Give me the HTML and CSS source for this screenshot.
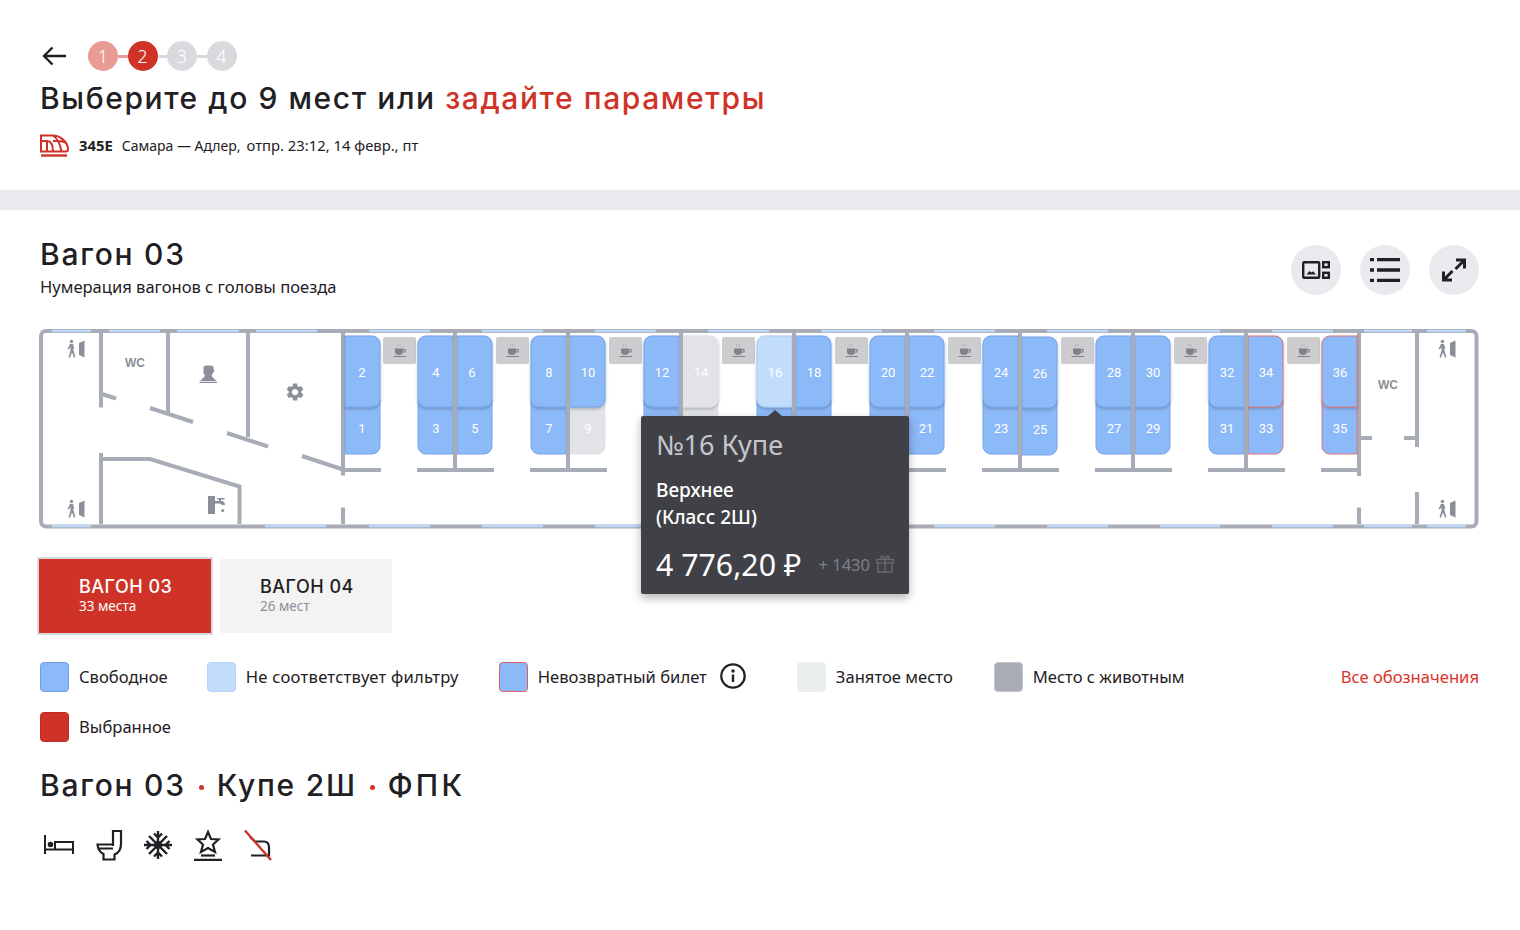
FILE: index.html
```html
<!DOCTYPE html>
<html lang="ru">
<head>
<meta charset="utf-8">
<title>Выбор мест</title>
<link rel="stylesheet" href="styles.css">
</head>
<body>
<header class="top">
  <div class="steps-row">
    <svg class="back" width="26" height="20" viewBox="0 0 26 20"><path d="M24 10H2M10.500 1.500 2 10l8.500 8.500" fill="none" stroke="#1f2024" stroke-width="2.400"/></svg>
    <ol class="steps">
      <li class="step done">1</li>
      <li class="link done"></li>
      <li class="step current">2</li>
      <li class="link"></li>
      <li class="step">3</li>
      <li class="link"></li>
      <li class="step">4</li>
    </ol>
  </div>
  <h1 class="title">Выберите до 9 мест или <a class="accent">задайте параметры</a></h1>
  <div class="route">
    <svg class="train" width="29" height="23" viewBox="0 0 29 23"><g fill="none" stroke="#cf3328" stroke-width="2"><path d="M1 1.500H13C20 1.500 26.500 7 28 14V15C28 16.500 27 17.500 26 17.500H1ZM1 7H7C11 7 13 10 13 17.500M7 7V17.500M13 7H18C21 7 24 7.500 26 9M13 1.500C17 4 20 9 21.500 17.500"/><path d="M1 21.500H27" stroke-width="2.400"/></g></svg>
    <b class="num">345Е</b>
    <span class="path">Самара — Адлер,</span>
    <span class="dep">отпр. 23:12, 14 февр., пт</span>
  </div>
</header>
<div class="band"></div>
<main class="wagon">
  <div class="wagon-head">
    <div>
      <h2 class="h2">Вагон 03</h2>
      <p class="sub">Нумерация вагонов с головы поезда</p>
    </div>
    <div class="tools">
      <button class="tool"><svg width="28" height="18" viewBox="0 0 28 18"><g fill="none" stroke="#1f2024" stroke-width="2.400"><rect x="1.200" y="1.200" width="16" height="15.600" rx="1"/><rect x="21.200" y="1.200" width="5.600" height="5"/><rect x="21.200" y="11.800" width="5.600" height="5"/></g><path d="M4.500 13.500 7.500 10 9.500 11.500 11 10.200 14 13.500Z" fill="#1f2024"/></svg></button>
      <button class="tool"><svg width="30" height="24" viewBox="0 0 30 24"><path d="M0 1.700H4M7 1.700H30M0 12H4M7 12H30M0 22.300H4M7 22.300H30" fill="none" stroke="#1f2024" stroke-width="3.300"/></svg></button>
      <button class="tool"><svg width="24" height="24" viewBox="0 0 24 24"><path d="M14 2H22.500V10.500M22 2.500 13.500 11M10 22H1.500V13.500M2 21.500 10.500 13" fill="none" stroke="#1f2024" stroke-width="3"/></svg></button>
    </div>
  </div>

  <div class="plan">
    <svg class="plan-svg" width="1440" height="200" viewBox="39 329 1440 200">
      <defs>
        <path id="ul" d="M8 0H35V71H8a8 8 0 0 1-8-8V8a8 8 0 0 1 8-8z"/>
        <path id="ur" d="M0 0H27a8 8 0 0 1 8 8V63a8 8 0 0 1-8 8H0z"/>
        <path id="ll" d="M0 0H35V54H8a8 8 0 0 1-8-8z"/>
        <path id="lr" d="M0 0H35V46a8 8 0 0 1-8 8H0z"/>
        <filter id="lift" x="-30%" y="-10%" width="160%" height="125%"><feDropShadow dx="0" dy="1.500" stdDeviation="1.500" flood-color="#40506a" flood-opacity=".4"/></filter>
        <g id="cup">
          <rect x="-16.500" y="-13.500" width="33" height="27" rx="2" fill="#cdcdcf"/>
          <path d="M-4.500-2H3.500V1.500C3.500 3.500 1.500 4.500-.5 4.500S-4.500 3.500-4.500 1.500Z" fill="#7f828a"/>
          <path d="M3-1H5.500V1.500H2.500" fill="none" stroke="#7f828a" stroke-width="1.200"/>
          <path d="M-6 6H6.500" stroke="#7f828a" stroke-width="1"/>
          <path d="M-2-6.500V-4M.5-6.500V-4" stroke="#aeb0b5" stroke-width="1"/>
        </g>
        <g id="exit" fill="#8b8f99">
          <circle cx="-4.500" cy="-7.500" r="1.700"/>
          <path d="M-6-5H-3L-1.500 0-3-.5-2 3-.5 8.500H-2L-4 3.500-6 8.500H-7.500L-5.500 1.500-5.500-2-7 0.500-8.500 0Z"/>
          <path d="M3-6 8.500-8.500V8.500L3 6Z"/>
        </g>
      </defs>

      <rect class="frame" x="41" y="331" width="1435.500" height="195.500" rx="5"/>
      <path class="win" d="M52 331H91M109 331H160M177 331H239M256 331H317M369 331H430M482 331H543M595 331H656M708 331H769M821 331H882M934 331H995M1047 331H1108M1160 331H1220M1272 331H1333M1364 331H1412M1427 331H1466M52 526H91M265 526H326M369 526H430M482 526H543M595 526H656M708 526H769M821 526H882M934 526H995M1047 526H1108M1160 526H1220M1272 526H1333M1364 526H1412M1427 526H1466"/>

      <g class="walls">
        <path d="M101 333V407.500M102 394 116 398.500M168 333V413M150 408 193 422M248 333V437M227 433 268 446.500M343 333V475.500M302 456 343 469.500"/>
        <path d="M101 453V524M101 459H150L239.500 486.500V524M343 507.500V524"/>
        <path d="M1359 333V476M1359 507.500V524M1359 438H1372M1417 333V447M1404 438H1417M1417 492V524"/>
        <path d="M345 470H381M417 470H494M530 470H607M643 470H720M756 470H833M869 470H946M982 470H1059M1095 470H1172M1208 470H1285M1321 470H1359"/>
      </g>

      <use href="#cup" x="399.500" y="350.500"/>
      <use href="#cup" x="512.500" y="350.500"/>
      <use href="#cup" x="625.500" y="350.500"/>
      <use href="#cup" x="738.500" y="350.500"/>
      <use href="#cup" x="851.500" y="350.500"/>
      <use href="#cup" x="964.500" y="350.500"/>
      <use href="#cup" x="1077.500" y="350.500"/>
      <use href="#cup" x="1190.500" y="350.500"/>
      <use href="#cup" x="1303.500" y="350.500"/>

      <g class="seats">
        <use href="#lr" x="345" y="400" class="free"/>
        <use href="#ll" x="418" y="400" class="free"/><use href="#lr" x="457" y="400" class="free"/>
        <use href="#ll" x="531" y="400" class="free"/><use href="#lr" x="570" y="400" class="busy"/>
        <use href="#ll" x="644" y="400" class="free"/><use href="#lr" x="683" y="400" class="busy"/>
        <use href="#ll" x="757" y="400" class="free"/><use href="#lr" x="796" y="400" class="free"/>
        <use href="#ll" x="870" y="400" class="free"/><use href="#lr" x="909" y="400" class="free"/>
        <use href="#ll" x="983" y="400" class="free"/><use href="#lr" x="1022" y="401" class="free"/>
        <use href="#ll" x="1096" y="400" class="free"/><use href="#lr" x="1135" y="400" class="free"/>
        <use href="#ll" x="1209" y="400" class="free"/><use href="#lr" x="1248" y="400" class="noref"/>
        <use href="#ll" x="1322" y="400" class="noref"/>
      </g>
      <g class="seats upper">
        <use href="#ur" x="345" y="336" class="free"/>
        <use href="#ul" x="418" y="336" class="free"/><use href="#ur" x="457" y="336" class="free"/>
        <use href="#ul" x="531" y="336" class="free"/><use href="#ur" x="570" y="336" class="free"/>
        <use href="#ul" x="644" y="336" class="free"/><use href="#ur" x="683" y="336" class="busy"/>
        <use href="#ul" x="757" y="336" class="nomatch"/><use href="#ur" x="796" y="336" class="free"/>
        <use href="#ul" x="870" y="336" class="free"/><use href="#ur" x="909" y="336" class="free"/>
        <use href="#ul" x="983" y="336" class="free"/><use href="#ur" x="1022" y="337" class="free"/>
        <use href="#ul" x="1096" y="336" class="free"/><use href="#ur" x="1135" y="336" class="free"/>
        <use href="#ul" x="1209" y="336" class="free"/><use href="#ur" x="1248" y="336" class="noref"/>
        <use href="#ul" x="1322" y="336" class="noref"/>
      </g>

      <g class="walls">
        <path d="M455 333V470M568 333V470M681 333V470M794 333V470M907 333V470M1020 333V470M1133 333V470M1246 333V470"/>
      </g>

      <g class="nums">
        <text x="362" y="372.500">2</text><text x="362" y="428">1</text>
        <text x="436" y="372.500">4</text><text x="472" y="372.500">6</text><text x="436" y="428">3</text><text x="475" y="428">5</text>
        <text x="549" y="372.500">8</text><text x="588" y="372.500">10</text><text x="549" y="428">7</text><text x="588" y="428">9</text>
        <text x="662" y="372.500">12</text><text x="701" y="372.500">14</text>
        <text x="775" y="372.500">16</text><text x="814" y="372.500">18</text>
        <text x="888" y="372.500">20</text><text x="927" y="372.500">22</text><text x="926" y="428">21</text>
        <text x="1001" y="372.500">24</text><text x="1040" y="373.500">26</text><text x="1001" y="428">23</text><text x="1040" y="429">25</text>
        <text x="1114" y="372.500">28</text><text x="1153" y="372.500">30</text><text x="1114" y="428">27</text><text x="1153" y="428">29</text>
        <text x="1227" y="372.500">32</text><text x="1266" y="372.500">34</text><text x="1227" y="428">31</text><text x="1266" y="428">33</text>
        <text x="1340" y="372.500">36</text><text x="1340" y="428">35</text>
      </g>

      <text class="wc" x="135" y="362.500">WC</text>
      <text class="wc" x="1388" y="384.500">WC</text>
      <use href="#exit" x="76" y="349"/>
      <use href="#exit" x="76" y="509"/>
      <use href="#exit" x="1447" y="349"/>
      <use href="#exit" x="1447" y="509"/>
      <g class="gl">
        <path d="M203.500 366.500C205 365 212 365 213.500 366.500V369C214.500 369 214.500 372.500 213 373L211.500 376 216.500 381H200L205 376 203.500 373ZM199.500 381.800H217V383H199.500Z"/>
        <path transform="translate(284.500 381.500) scale(.88)" d="M19.140 12.940c.04-.3.06-.61.06-.94 0-.32-.02-.64-.07-.94l2.030-1.580c.18-.14.230-.41.120-.61l-1.920-3.320c-.12-.22-.37-.29-.59-.22l-2.390.96c-.5-.38-1.030-.7-1.620-.94l-.36-2.540c-.04-.24-.24-.41-.48-.41h-3.840c-.24 0-.43.170-.47.410l-.36 2.540c-.59.240-1.130.570-1.620.940l-2.390-.96c-.22-.08-.47 0-.59.220L2.740 8.870c-.12.210-.08.470.120.610l2.030 1.580c-.05.3-.09.63-.09.94s.02.64.07.94l-2.030 1.580c-.18.140-.23.410-.12.610l1.920 3.320c.12.220.37.290.59.220l2.390-.96c.5.380 1.030.7 1.620.94l.36 2.540c.05.240.24.410.48.410h3.840c.24 0 .44-.17.47-.41l.36-2.540c.59-.24 1.130-.56 1.620-.94l2.390.96c.22.08.47 0 .59-.22l1.920-3.320c.12-.22.07-.47-.12-.61l-2.010-1.580zM12 15.600c-1.980 0-3.600-1.620-3.600-3.600s1.620-3.600 3.600-3.600 3.600 1.620 3.600 3.600-1.620 3.600-3.600 3.600z"/>
        <path d="M208 496H215V501H219V499.500H217V498H224.500V499.500H221V501C223.500 501 225 502.500 225 505H221.500C221.500 504 220.500 503.500 219 503.500H215V514H208Z"/>
        <circle cx="222.700" cy="510.500" r="1.500"/>
      </g>
    </svg>

    <div class="tip">
      <div class="tip-title">№16 Купе</div>
      <div class="tip-kind">Верхнее<br>(Класс 2Ш)</div>
      <div class="tip-price">
        <span class="price">4 776,20 ₽</span>
        <span class="bonus">+ 1430</span>
        <svg class="gift" width="18" height="18" viewBox="0 0 18 18"><g fill="none" stroke="#686a70" stroke-width="1.400"><rect x=".7" y="4.500" width="16.600" height="3.500"/><path d="M2 8V17H16V8M9 4.500V17M9 4.500C7 4.500 4.500 3.500 5 1.500 6.500 0 8.500 2 9 4.500 9.500 2 11.500 0 13 1.500 13.500 3.500 11 4.500 9 4.500Z"/></g></svg>
      </div>
    </div>
  </div>

  <div class="tabs">
    <button class="tab on"><span class="tab-name">ВАГОН 03</span><span class="tab-sub">33 места</span></button>
    <button class="tab"><span class="tab-name">ВАГОН 04</span><span class="tab-sub">26 мест</span></button>
  </div>

  <div class="legend">
    <div class="legend-row">
      <div class="item"><i class="sw sw-free"></i>Свободное</div>
      <div class="item item-wide"><i class="sw sw-nomatch"></i>Не соответствует фильтру</div>
      <div class="item item-info"><i class="sw sw-noref"></i>Невозвратный билет
        <svg class="info" width="26" height="26" viewBox="0 0 26 26"><circle cx="13" cy="13" r="11.700" fill="none" stroke="#1f2024" stroke-width="2.200"/><circle cx="13" cy="8" r="1.700" fill="#1f2024"/><path d="M13 11.500V19" stroke="#1f2024" stroke-width="2.400"/></svg>
      </div>
      <div class="item item-busy"><i class="sw sw-busy"></i>Занятое место</div>
      <div class="item"><i class="sw sw-pet"></i>Место с животным</div>
      <a class="all">Все обозначения</a>
    </div>
    <div class="legend-row">
      <div class="item"><i class="sw sw-sel"></i>Выбранное</div>
    </div>
  </div>

  <h2 class="h2 summary">Вагон 03<span class="dot"></span>Купе 2Ш<span class="dot"></span><span class="org">ФПК</span></h2>

  <div class="feats">
    <svg width="30" height="32" viewBox="0 0 30 32"><g fill="none" stroke="#1f2024" stroke-width="2"><path d="M1 6V25M29 25V13H11V20.500H1M1 20.500H29"/></g><circle cx="6.500" cy="15.500" r="2.800" fill="#1f2024"/></svg>
    <svg width="30" height="32" viewBox="0 0 30 32"><path d="M19 17V2H27V15C27 20 24.500 24 20.500 25.500V30.500H9.500V25C6.500 23.500 4 21 3.500 15.500H19M3.500 19.500H19" fill="none" stroke="#1f2024" stroke-width="2.200"/></svg>
    <svg width="30" height="32" viewBox="0 0 30 32"><g fill="none" stroke="#1f2024" stroke-width="2.400"><path d="M15 2V30M1 16H29M6 7 24 25M24 7 6 25M11 4.500 15 8.500 19 4.500M11 27.500 15 23.500 19 27.500M3.500 12 7.500 16 3.500 20M26.500 12 22.500 16 26.500 20"/><path d="M15 12.500 18.500 16 15 19.500 11.500 16Z"/></g></svg>
    <svg width="30" height="32" viewBox="0 0 30 32"><g fill="none" stroke="#1f2024" stroke-width="2.200"><path d="M15 3 18 10 25.500 10.500 20 15.500 22 23 15 19 8 23 10 15.500 4.500 10.500 12 10Z"/><path d="M8 26.500H22"/><path d="M1 31H29" stroke-width="2.500"/></g></svg>
    <svg width="30" height="32" viewBox="0 0 30 32"><g fill="none" stroke="#1f2024" stroke-width="2.200"><path d="M8 8 13 12.500H22C26 12.500 27 15.500 27 18.500V26.500H9"/></g><path d="M3 1.500 29 31" stroke="#cf3328" stroke-width="2.400"/></svg>
  </div>
</main>
</body>
</html>
```
FILE: styles.css
```css
* { box-sizing: border-box; }
html, body { margin: 0; padding: 0; background: #fff; }
body { font-family: "Noto Sans", "Open Sans", sans-serif; color: #1f2024; width: 1520px; height: 930px; overflow: hidden; }

.top { height: 190px; padding: 41px 40px 0; }
.steps-row { display: flex; align-items: center; height: 30px; gap: 20px; }
.back { margin-left: 2px; }
.steps { display: flex; align-items: center; list-style: none; margin: 0; padding: 0; }
.step { width: 30px; height: 30px; border-radius: 50%; background: #d9dade; color: #fff; font-size: 18px; font-weight: 300; line-height: 30px; text-align: center; }
.step.done { background: #e99c95; }
.step.current { background: #cf3328; }
.link { width: 9.5px; height: 3px; background: #d9dade; }
.link.done { background: #e99c95; }
.title { margin: 7px 0 0; font-family: Inter, sans-serif; font-weight: 500; font-size: 30px; line-height: 40px; letter-spacing: 1.58px; color: #1f2024; }
.accent { color: #cf3328; }
.route { display: flex; align-items: center; height: 24px; margin-top: 15px; font-size: 14.8px; }
.train { margin-right: 10px; }
.num { font-weight: 700; margin-right: 9px; }
.path { font-size: 14px; margin-right: 6px; }

.band { height: 20px; background: #e9eaed; }

.wagon { position: relative; padding: 0 41px 0 39px; }
.wagon-head { display: flex; justify-content: space-between; height: 119px; padding: 24px 0 0 1px; }
.h2 { margin: 0; font-family: Inter, sans-serif; font-weight: 500; font-size: 30px; line-height: 40px; letter-spacing: 1.75px; }
.sub { margin: 1px 0 0; font-size: 16.56px; line-height: 24px; }
.tools { display: flex; gap: 19px; margin-top: 11px; }
.tool { width: 50px; height: 50px; border: 0; padding: 0; border-radius: 50%; background: #e9eaed; display: flex; align-items: center; justify-content: center; }

.plan { position: relative; height: 200px; }
.plan-svg { display: block; }
.frame { fill: #fff; stroke: #a8acb6; stroke-width: 4; }
.win { stroke: #bdd8f8; stroke-width: 2.500; fill: none; }
.walls path { stroke: #a8acb6; stroke-width: 4; fill: none; }
.seats use { stroke-width: 1; }
.upper { filter: url(#lift); }
.free { fill: #8cb9f7; stroke: #74a3ea; }
.nomatch { fill: #c2dcfc; stroke: #a9cdf8; }
.busy { fill: #e2e3e6; stroke: #e2e3e6; }
.noref { fill: #8cb9f7; stroke: #e0737a; }
.nums text { font-family: Roboto, sans-serif; font-size: 13px; fill: #fff; text-anchor: middle; dominant-baseline: central; }
.wc { font-family: "Liberation Sans", sans-serif; font-weight: 700; font-size: 12px; fill: #8b8f99; text-anchor: middle; dominant-baseline: central; }
.gl { fill: #8b8f99; }

.tip { position: absolute; left: 602px; top: 87px; width: 268px; height: 178px; padding: 11px 15px 0; background: #404146; border-radius: 2px; box-shadow: 0 4px 10px rgba(0, 0, 0, .3); color: #fff; }
.tip::before { content: ""; position: absolute; left: 127px; top: -6px; border-left: 7px solid transparent; border-right: 7px solid transparent; border-bottom: 6px solid #404146; }
.tip-title { font-size: 27px; line-height: 36px; color: #c4c6cc; }
.tip-kind { margin-top: 14px; font-size: 19px; line-height: 27px; font-weight: 500; }
.tip-price { display: flex; align-items: center; margin-top: 15px; height: 36px; }
.price { font-size: 30.3px; margin-right: 17px; }
.bonus { font-size: 16.5px; color: #7d8087; margin-right: 6px; }

.tabs { display: flex; gap: 9px; margin-top: 30px; }
.tab { width: 172px; height: 74px; border: 0; background: #f3f3f3; padding: 17px 0 0 40px; font-family: inherit; color: #1f2024; text-align: left; display: flex; flex-direction: column; justify-content: flex-start; }
.tab.on { background: #cf3328; color: #fff; outline: 2px solid #d8dadd; }
.tab-name { font-family: Inter, sans-serif; font-weight: 500; font-size: 18px; line-height: 22px; letter-spacing: .5px; }
.tab-sub { font-size: 13.5px; line-height: 18px; color: #8b8f99; margin-top: -1px; }
.tab.on .tab-sub { color: #fff; }

.legend { margin: 29px 0 0 1px; display: flex; flex-direction: column; gap: 20px; }
.legend-row { display: flex; align-items: center; gap: 39px; height: 30px; }
.item { display: flex; align-items: center; gap: 10px; padding-bottom: 2px; font-size: 16.6px; white-space: nowrap; }
.item-wide { letter-spacing: .25px; margin-right: 1px; }
.item-info { margin-right: 12px; }
.item-busy { margin-right: 2px; }
.info { margin-left: 3px; }
.sw { display: block; width: 29px; height: 30px; margin-bottom: -2px; border-radius: 4px; border: 1px solid transparent; }
.sw-free { background: #8cb9f7; border-color: #6f9de6; }
.sw-nomatch { background: #c2dcfc; border-color: #b5d3fb; }
.sw-noref { background: #8cb9f7; border-color: #e0606a; }
.sw-busy { background: #ebeeef; border-color: #ebeeef; }
.sw-pet { background: #a8acb6; border-color: #c3c6cd; }
.sw-sel { background: #cf3328; border-color: #bb2c22; }
.all { margin-left: auto; color: #d9342b; font-size: 16.6px; padding-bottom: 2px; }

.summary { margin: 23px 0 0 1px; display: flex; align-items: center; }
.dot { width: 5px; height: 5px; border-radius: 50%; background: #cf3328; margin: 4px 12.5px 0 13.5px; }
.org { letter-spacing: 3.2px; }
.feats { display: flex; align-items: center; gap: 19.5px; margin: 24px 0 0 5px; height: 32px; }
```
